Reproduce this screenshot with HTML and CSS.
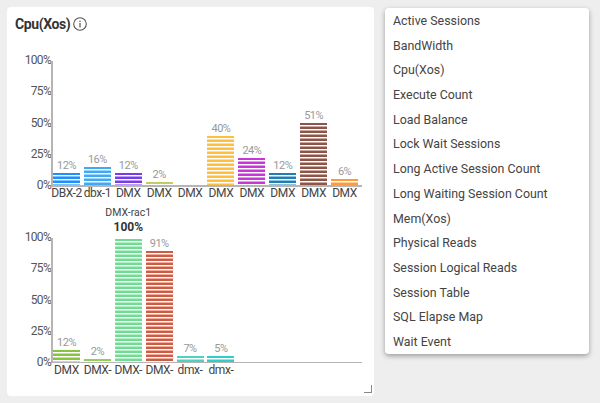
FILE: index.html
```html
<!doctype html>
<html lang="en">
<head>
    <meta charset="UTF-8">
    <title>Cpu(Xos)</title>
    <link rel="stylesheet" href="styles.css">
</head>
<body>
    <div class="page">
        <div class="panel">
            <div class="panel-title">
                <span>Cpu(Xos)</span>
                <svg class="info" viewBox="0 0 14 14" width="14" height="14">
                    <circle cx="7" cy="7" r="6.3" fill="none" stroke="#555" stroke-width="1.1"/>
                    <rect x="6.4" y="6" width="1.2" height="4.4" fill="#555"/>
                    <rect x="6.4" y="3.7" width="1.2" height="1.3" fill="#555"/>
                </svg>
            </div>
            <div class="chart chart-one">
                <div class="axis">
                    <span>100%</span><span>75%</span><span>50%</span><span>25%</span><span>0%</span>
                </div>
                <div class="plot">
                    <div class="col"><em>12%</em><i class="bar c1" style="height:12px"></i><b>DBX-2</b></div>
                    <div class="col"><em>16%</em><i class="bar c2" style="height:18px"></i><b>dbx-1</b></div>
                    <div class="col"><em>12%</em><i class="bar c3" style="height:12px"></i><b>DMX</b></div>
                    <div class="col"><em>2%</em><i class="bar c4" style="height:3px"></i><b>DMX</b></div>
                    <div class="col"><i class="bar" style="height:0"></i><b>DMX</b></div>
                    <div class="col"><em>40%</em><i class="bar c5" style="height:49px"></i><b>DMX</b></div>
                    <div class="col"><em>24%</em><i class="bar c6" style="height:27px"></i><b>DMX</b></div>
                    <div class="col"><em>12%</em><i class="bar c7" style="height:12px"></i><b>DMX</b></div>
                    <div class="col"><em>51%</em><i class="bar c8" style="height:62px"></i><b>DMX</b></div>
                    <div class="col"><em>6%</em><i class="bar c9" style="height:6px"></i><b>DMX</b></div>
                </div>
            </div>
            <div class="chart chart-two">
                <div class="axis">
                    <span>100%</span><span>75%</span><span>50%</span><span>25%</span><span>0%</span>
                </div>
                <div class="plot">
                    <div class="col"><em>12%</em><i class="bar c10" style="height:12px"></i><b>DMX</b></div>
                    <div class="col"><em>2%</em><i class="bar c11" style="height:3px"></i><b>DMX-</b></div>
                    <div class="col">
                        <div class="peak"><small>DMX-rac1</small><strong>100%</strong></div>
                        <i class="bar c12" style="height:123px"></i><b>DMX-</b>
                    </div>
                    <div class="col"><em>91%</em><i class="bar c13" style="height:111px"></i><b>DMX-</b></div>
                    <div class="col"><em>7%</em><i class="bar c14" style="height:6px"></i><b>dmx-</b></div>
                    <div class="col"><em>5%</em><i class="bar c15" style="height:6px"></i><b>dmx-</b></div>
                </div>
            </div>
            <span class="resize"></span>
        </div>
        <ul class="menu">
            <li>Active Sessions</li>
            <li>BandWidth</li>
            <li>Cpu(Xos)</li>
            <li>Execute Count</li>
            <li>Load Balance</li>
            <li>Lock Wait Sessions</li>
            <li>Long Active Session Count</li>
            <li>Long Waiting Session Count</li>
            <li>Mem(Xos)</li>
            <li>Physical Reads</li>
            <li>Session Logical Reads</li>
            <li>Session Table</li>
            <li>SQL Elapse Map</li>
            <li>Wait Event</li>
        </ul>
    </div>
</body>
</html>
```
FILE: styles.css
```css
*{
    margin: 0;
    padding: 0;
    box-sizing: border-box;
}
html,body{
    width: 600px;
    height: 403px;
    overflow: hidden;
}
body{
    background: #eeeeee;
    font-family: Roboto, "Liberation Sans", sans-serif;
}
li{
    list-style: none;
}
.page{
    display: flex;
    align-items: flex-start;
    padding: 7px 11px 0 7px;
    gap: 11px;
}
.panel{
    position: relative;
    width: 367px;
    height: 389px;
    background: #fff;
    border-radius: 4px;
}
.panel-title{
    display: flex;
    align-items: center;
    gap: 3px;
    height: 18px;
    margin: 8px 0 0 8px;
    font-size: 14px;
    letter-spacing: -.4px;
    font-weight: 700;
    color: #333;
}
.info{
    display: block;
}
.chart{
    display: flex;
}
.chart-one{
    margin-top: 28px;
}
.chart-two{
    margin-top: 46px;
}
.axis{
    width: 44px;
    height: 139px;
    margin-top: -8px;
    display: flex;
    flex-direction: column;
    justify-content: space-between;
    align-items: flex-end;
    font-size: 12px;
    letter-spacing: -.7px;
    line-height: 14px;
    color: #555;
}
.plot{
    display: flex;
    width: 311px;
    height: 126px;
    border-left: 2px solid #b5b5b5;
    border-bottom: 2px solid #b5b5b5;
    gap: 3.9px;
}
.chart-two .plot{
    height: 125px;
    border-bottom-width: 1px;
}
.col{
    position: relative;
    width: 27px;
    height: 100%;
    display: flex;
    flex-direction: column;
    justify-content: flex-end;
    align-items: center;
}
.col em{
    font-style: normal;
    font-size: 11px;
    letter-spacing: -.5px;
    line-height: 13px;
    margin-bottom: 1px;
    color: #999;
    white-space: nowrap;
}
.col b{
    position: absolute;
    top: 100%;
    left: 50%;
    transform: translateX(-50%);
    margin-top: 1px;
    font-weight: 400;
    font-size: 12px;
    letter-spacing: -.4px;
    line-height: 14px;
    color: #444;
    white-space: nowrap;
}
.peak{
    position: absolute;
    bottom: 100%;
    left: 50%;
    transform: translateX(-50%);
    display: flex;
    flex-direction: column;
    align-items: center;
    margin-bottom: 3px;
    white-space: nowrap;
}
.peak small{
    font-size: 10.5px;
    line-height: 13px;
    color: #444;
}
.peak strong{
    font-size: 12px;
    line-height: 16px;
    color: #333;
}
.bar{
    display: block;
    width: 27px;
    flex: none;
    background: repeating-linear-gradient(to bottom, var(--bar) 0, var(--bar) 2px, #fff 2px, #fff 3px, var(--soft) 3px, var(--soft) 4px);
}
.c1{ --bar: #1e90ff; --soft: #7fc0ff; }
.c2{ --bar: #3fa9f5; --soft: #9ed4fa; }
.c3{ --bar: #7c3aed; --soft: #b99cf3; }
.c4{ --bar: #c4cc5a; --soft: #dfe3a5; }
.c5{ --bar: #fdbf3c; --soft: #fedd96; }
.c6{ --bar: #c935d8; --soft: #e39aec; }
.c7{ --bar: #1f7fb5; --soft: #8fbfda; }
.c8{ --bar: #8d5547; --soft: #c6aaa3; }
.c9{ --bar: #ff9a3c; --soft: #ffcc9d; }
.c10{ --bar: #86c440; --soft: #c2e19f; }
.c11{ --bar: #94cf55; --soft: #c9e7aa; }
.c12{ --bar: #6fdc92; --soft: #b7edc8; }
.c13{ --bar: #cf5c42; --soft: #e7ada0; }
.c14{ --bar: #4fd1c0; --soft: #a7e8df; }
.c15{ --bar: #2fcfc8; --soft: #97e7e3; }
.resize{
    position: absolute;
    right: 2px;
    bottom: 3px;
    width: 8px;
    height: 8px;
    border-right: 1px solid #888;
    border-bottom: 1px solid #888;
}
.menu{
    width: 204px;
    margin-top: 1px;
    height: 346px;
    padding-top: 1px;
    background: #fff;
    border-radius: 4px;
    box-shadow: 0 2px 5px rgba(0,0,0,.35);
}
.menu li{
    height: 24.7px;
    line-height: 24.7px;
    padding-left: 8px;
    font-size: 12.4px;
    color: #444;
}
```
